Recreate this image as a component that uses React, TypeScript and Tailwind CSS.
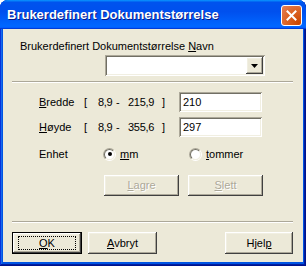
const raised =
  "bg-[#ece9d8] shadow-[inset_-1px_-1px_#404040,inset_1px_1px_#fff,inset_-2px_-2px_#aca899,inset_2px_2px_#f1efe2]";
const sunken =
  "bg-white shadow-[inset_1px_1px_#aca899,inset_-1px_-1px_#fff,inset_2px_2px_#716f64,inset_-2px_-2px_#f1efe2]";

const Sep = ({ className = "" }: { className?: string }) => (
  <div className={`ml-[9px] mr-[10px] h-[2px] border-t border-t-[#aca899] border-b border-b-white ${className}`} />
);

const Radio = ({ checked }: { checked?: boolean }) => (
  <div className="w-[13px] h-[13px] rounded-full border border-t-[#aca899] border-l-[#aca899] border-b-white border-r-white">
    <div className="w-full h-full rounded-full border border-t-[#716f64] border-l-[#716f64] border-b-[#f1efe2] border-r-[#f1efe2] bg-white flex items-center justify-center">
      {checked && <div className="w-[4px] h-[4px] rounded-full bg-black" />}
    </div>
  </div>
);

const Btn = ({
  children,
  className = "",
  disabled,
}: {
  children: React.ReactNode;
  className?: string;
  disabled?: boolean;
}) => (
  <div
    className={`${raised} flex items-center justify-center ${
      disabled ? "text-[#aca899] [text-shadow:1px_1px_#fff]" : "text-black"
    } ${className}`}
  >
    {children}
  </div>
);

const RangeRow = ({ label, max, value }: { label: React.ReactNode; max: string; value: string }) => (
  <div className="flex items-center h-[20px]">
    <span className="ml-[36px] w-[45px] shrink-0">{label}</span>
    <span className="w-[14px] shrink-0">[</span>
    <span className="w-[16px] shrink-0 tracking-[-0.3px]">8,9</span>
    <span className="w-[14px] shrink-0 pl-[2px]">-</span>
    <span className="w-[34px] shrink-0 tracking-[-0.3px]">{max}</span>
    <span className="w-[17px] shrink-0">]</span>
    <div className={`${sunken} w-[83px] h-[20px] pl-[4px] flex items-center`}>{value}</div>
  </div>
);

export default function App() {
  return (
    <div className="w-[306px] h-[266px] flex flex-col rounded-t-[8px] overflow-hidden bg-[#0054e3] shadow-[inset_-1px_-1px_#00138c,inset_1px_1px_#0831d9,inset_-2px_-2px_#001ea0,inset_2px_2px_#166aee] font-['Liberation_Sans',Arial,sans-serif] text-[11px] leading-[13px]">
      {/* title bar */}
      <div className="h-[29px] shrink-0 flex items-center pl-[7px] pr-[4px] bg-[linear-gradient(180deg,#0997ff,#0053ee_8%,#0050ee_40%,#06f_88%,#06f_93%,#005bff_95%,#003dd7_96%,#003dd7)]">
        <span className="flex-1 text-white font-bold text-[13px] [text-shadow:1px_1px_#0a1883]">
          Brukerdefinert Dokumentstørrelse
        </span>
        <div className="mt-[2px] w-[21px] h-[21px] rounded-[3px] border border-white bg-[radial-gradient(circle_at_90%_90%,#cc4600_0%,#dc6527_55%,#e5805a_100%)] flex items-center justify-center">
          <svg width="11" height="11" viewBox="0 0 11 11">
            <path d="M1.5 1.5 L9.5 9.5 M9.5 1.5 L1.5 9.5" stroke="white" strokeWidth="2" strokeLinecap="square" />
          </svg>
        </div>
      </div>

      {/* body */}
      <div className="flex-1 mx-[3px] mb-[4px] bg-[#ece9d8] flex flex-col text-black">
        <div className="pt-[11px] ml-[17px]">
          Brukerdefinert Dokumentstørrelse <u>N</u>avn
        </div>
        <div className={`${sunken} mt-[2px] ml-[102px] w-[160px] h-[21px] p-[2px] flex justify-end`}>
          <div className={`${raised} w-[17px] h-full flex items-center justify-center`}>
            <svg width="7" height="4" viewBox="0 0 7 4">
              <path d="M0 0 H7 L3.5 4 Z" fill="black" />
            </svg>
          </div>
        </div>
        <Sep className="mt-[5px]" />

        <div className="mt-[9px]">
          <RangeRow label={<><u>B</u>redde</>} max="215,9" value="210" />
        </div>
        <div className="mt-[5px]">
          <RangeRow label={<><u>H</u>øyde</>} max="355,6" value="297" />
        </div>

        <div className="mt-[9px] h-[16px] flex items-center">
          <span className="ml-[36px] w-[64px]">Enhet</span>
          <Radio checked />
          <span className="ml-[4px] w-[69px]">
            <u>m</u>m
          </span>
          <Radio />
          <span className="ml-[4px]">
            <u>t</u>ommer
          </span>
        </div>

        <div className="mt-[13px] ml-[101px] flex gap-[9px]">
          <Btn disabled className="w-[75px] h-[21px]">
            <span>
              <u>L</u>agre
            </span>
          </Btn>
          <Btn disabled className="w-[75px] h-[21px]">
            <span>
              <u>S</u>lett
            </span>
          </Btn>
        </div>

        <Sep className="mt-[25px]" />

        <div className="mt-[9px] ml-[9px] mr-[10px] flex">
          <div className="w-[70px] h-[22px] border border-black">
            <Btn className="w-full h-full">
              <div className="w-[58px] h-[14px] border border-dotted border-black flex items-center justify-center">
                <span>
                  <u>O</u>K
                </span>
              </div>
            </Btn>
          </div>
          <Btn className="ml-[6px] w-[69px] h-[22px]">
            <span>
              <u>A</u>vbryt
            </span>
          </Btn>
          <div className="flex-1" />
          <Btn className="w-[68px] h-[22px]">
            <span>
              Hjel<u>p</u>
            </span>
          </Btn>
        </div>
      </div>
    </div>
  );
}
